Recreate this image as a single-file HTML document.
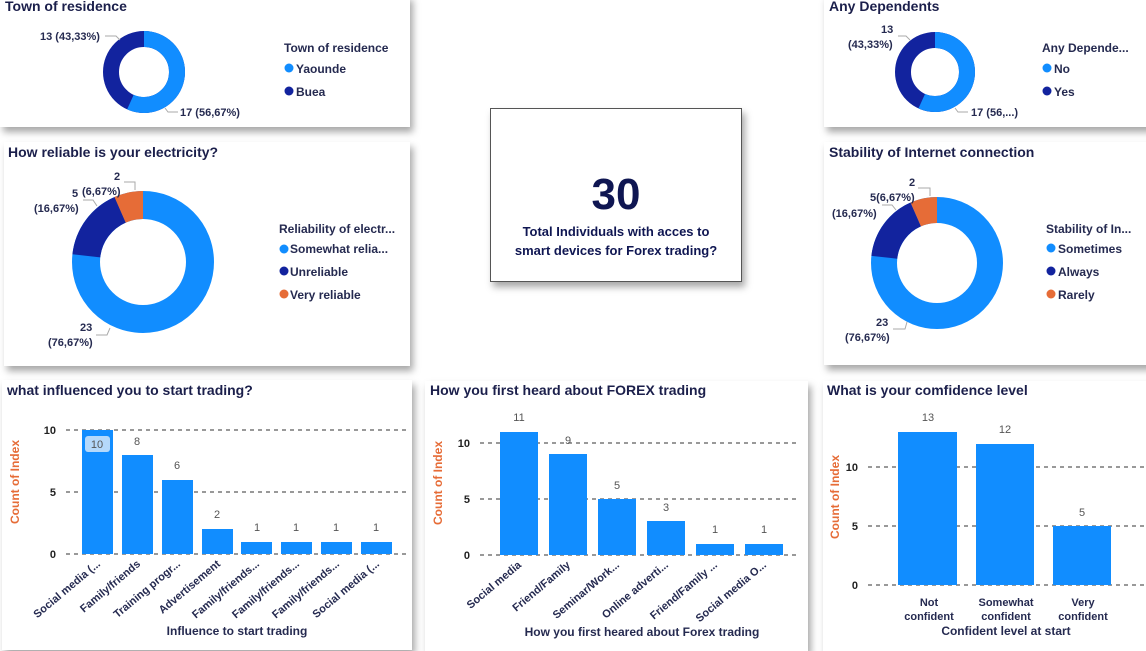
<!DOCTYPE html>
<html><head><meta charset="utf-8"><style>
html,body{margin:0;padding:0;background:#fff;width:1146px;height:639px;overflow:hidden;font-family:"Liberation Sans",sans-serif}
.c{position:absolute;background:#fff;box-shadow:3px 5px 7px rgba(0,0,0,.35)}
svg{position:absolute;left:0;top:0}
text{font-family:"Liberation Sans",sans-serif}
.t{font-size:14px;font-weight:bold;fill:#1b1f4b}
.l{font-size:11px;font-weight:bold;fill:#252a50}
.lg{font-size:12px;font-weight:bold;fill:#252a50}
.v{font-size:11px;fill:#555}
.ax{font-size:11px;font-weight:bold;fill:#222}
.yl{font-size:12px;font-weight:bold;fill:#e66c37}
.xl{font-size:12px;font-weight:bold;fill:#252a50}
</style></head><body>
<div class="c" style="left:0;top:-5px;width:410px;height:132px"></div>
<div class="c" style="left:4px;top:142px;width:406px;height:224px"></div>
<div class="c" style="left:2px;top:380px;width:410px;height:270px"></div>
<div class="c" style="left:425px;top:381px;width:383px;height:270px"></div>
<div class="c" style="left:823px;top:381px;width:330px;height:270px"></div>
<div class="c" style="left:824px;top:-5px;width:330px;height:132px"></div>
<div class="c" style="left:824px;top:142px;width:330px;height:223px"></div>
<div class="c" style="left:490px;top:108px;width:252px;height:174px;border:1px solid #555;box-sizing:border-box"></div>
<svg width="1146" height="639" viewBox="0 0 1146 639">
<!-- Card A -->
<text class="t" x="5" y="11">Town of residence</text>
<circle cx="144" cy="72" r="33" fill="none" stroke="#12239e" stroke-width="16"/>
<circle cx="144" cy="72" r="33" fill="none" stroke="#118dff" stroke-width="16" stroke-dasharray="117.5 300" transform="rotate(-90 144 72)"/>
<polyline points="105,36 116,36 120,40" fill="none" stroke="#aaa"/>
<text class="l" x="40" y="40">13 (43,33%)</text>
<polyline points="165,108 168,112 178,112" fill="none" stroke="#aaa"/>
<text class="l" x="180" y="116">17 (56,67%)</text>
<text class="lg" x="284" y="52">Town of residence</text>
<circle cx="289" cy="68" r="4.5" fill="#118dff"/><text class="lg" x="296" y="73">Yaounde</text>
<circle cx="289" cy="91" r="4.5" fill="#12239e"/><text class="lg" x="296" y="96">Buea</text>
<!-- Card B -->
<text class="t" x="8" y="157">How reliable is your electricity?</text>
<circle cx="143" cy="262" r="57" fill="none" stroke="#118dff" stroke-width="28"/>
<circle cx="143" cy="262" r="57" fill="none" stroke="#12239e" stroke-width="28" stroke-dasharray="59.7 400" stroke-dashoffset="-274.6" transform="rotate(-90 143 262)"/>
<circle cx="143" cy="262" r="57" fill="none" stroke="#e66c37" stroke-width="28" stroke-dasharray="23.9 400" stroke-dashoffset="-334.2" transform="rotate(-90 143 262)"/>
<text class="l" x="114" y="180">2</text>
<polyline points="124,182 135,182 135,190" fill="none" stroke="#aaa"/>
<text class="l" x="82" y="195">(6,67%)</text>
<text class="l" x="72" y="197">5</text>
<polyline points="83,200 93,200 97,206" fill="none" stroke="#aaa"/>
<text class="l" x="34" y="212">(16,67%)</text>
<text class="l" x="80" y="331">23</text>
<polyline points="96,335 107,335 110,328" fill="none" stroke="#aaa"/>
<text class="l" x="48" y="346">(76,67%)</text>
<text class="lg" x="279" y="233">Reliability of electr...</text>
<circle cx="284" cy="249" r="4.5" fill="#118dff"/><text class="lg" x="290" y="253">Somewhat relia...</text>
<circle cx="284" cy="271" r="4.5" fill="#12239e"/><text class="lg" x="290" y="276">Unreliable</text>
<circle cx="284" cy="294" r="4.5" fill="#e66c37"/><text class="lg" x="290" y="299">Very reliable</text>
<!-- Middle -->
<text x="616" y="209" text-anchor="middle" style="font-size:44px;font-weight:bold;fill:#0f1652">30</text>
<text x="616" y="236" text-anchor="middle" style="font-size:13px;font-weight:bold;fill:#0f1652">Total Individuals with acces to</text>
<text x="616" y="255" text-anchor="middle" style="font-size:13px;font-weight:bold;fill:#0f1652">smart devices for Forex trading?</text>
<!-- Card F -->
<text class="t" x="829" y="11">Any Dependents</text>
<circle cx="935" cy="72" r="32" fill="none" stroke="#12239e" stroke-width="16"/>
<circle cx="935" cy="72" r="32" fill="none" stroke="#118dff" stroke-width="16" stroke-dasharray="114 300" transform="rotate(-90 935 72)"/>
<text class="l" x="881" y="33">13</text>
<polyline points="898,36 906,36 910,40" fill="none" stroke="#aaa"/>
<text class="l" x="848" y="48">(43,33%)</text>
<polyline points="955,108 958,112 968,112" fill="none" stroke="#aaa"/>
<text class="l" x="971" y="116">17 (56,...)</text>
<text class="lg" x="1042" y="52">Any Depende...</text>
<circle cx="1047" cy="68" r="4.5" fill="#118dff"/><text class="lg" x="1054" y="73">No</text>
<circle cx="1047" cy="91" r="4.5" fill="#12239e"/><text class="lg" x="1054" y="96">Yes</text>
<!-- Card G -->
<text class="t" x="829" y="157">Stability of Internet connection</text>
<circle cx="937" cy="263" r="53" fill="none" stroke="#118dff" stroke-width="26"/>
<circle cx="937" cy="263" r="53" fill="none" stroke="#12239e" stroke-width="26" stroke-dasharray="55.5 400" stroke-dashoffset="-255.3" transform="rotate(-90 937 263)"/>
<circle cx="937" cy="263" r="53" fill="none" stroke="#e66c37" stroke-width="26" stroke-dasharray="22.2 400" stroke-dashoffset="-310.8" transform="rotate(-90 937 263)"/>
<text class="l" x="909" y="186">2</text>
<polyline points="918,188 930,188 930,196" fill="none" stroke="#aaa"/>
<text class="l" x="870" y="201">5(6,67%)</text>
<polyline points="882,205 892,205 896,210" fill="none" stroke="#aaa"/>
<text class="l" x="832" y="217">(16,67%)</text>
<text class="l" x="876" y="326">23</text>
<polyline points="893,329 905,329 907,322" fill="none" stroke="#aaa"/>
<text class="l" x="845" y="341">(76,67%)</text>
<text class="lg" x="1046" y="233">Stability of In...</text>
<circle cx="1051" cy="248" r="4.5" fill="#118dff"/><text class="lg" x="1058" y="253">Sometimes</text>
<circle cx="1051" cy="271" r="4.5" fill="#12239e"/><text class="lg" x="1058" y="276">Always</text>
<circle cx="1051" cy="294" r="4.5" fill="#e66c37"/><text class="lg" x="1058" y="299">Rarely</text>

<!-- Chart C -->
<text class="t" x="7" y="395">what influenced you to start trading?</text>
<g stroke="#333" stroke-dasharray="4 4"><line x1="66" y1="430" x2="410" y2="430"/><line x1="66" y1="492" x2="410" y2="492"/><line x1="66" y1="554" x2="410" y2="554"/></g>
<text class="ax" x="56" y="434" text-anchor="end">10</text><text class="ax" x="56" y="496" text-anchor="end">5</text><text class="ax" x="56" y="558" text-anchor="end">0</text>
<text class="yl" transform="translate(19 482) rotate(-90)" text-anchor="middle">Count of Index</text>
<g fill="#118dff">
<rect x="82" y="430" width="31" height="124"/><rect x="122" y="455" width="31" height="99"/><rect x="162" y="480" width="31" height="74"/><rect x="202" y="529" width="31" height="25"/><rect x="241" y="542" width="31" height="12"/><rect x="281" y="542" width="31" height="12"/><rect x="321" y="542" width="31" height="12"/><rect x="361" y="542" width="31" height="12"/>
</g>
<rect x="85" y="436" width="25" height="16" rx="3" fill="#b5d9fb"/>
<g class="v" text-anchor="middle"><text x="97" y="448">10</text><text x="137" y="445">8</text><text x="177" y="469">6</text><text x="217" y="518">2</text><text x="257" y="531">1</text><text x="296" y="531">1</text><text x="336" y="531">1</text><text x="376" y="531">1</text></g>
<g class="l" text-anchor="end">
<text transform="translate(101 565) rotate(-40)">Social media (...</text>
<text transform="translate(141 565) rotate(-40)">Family/friends</text>
<text transform="translate(181 565) rotate(-40)">Training progr...</text>
<text transform="translate(221 565) rotate(-40)">Advertisement</text>
<text transform="translate(260 565) rotate(-40)">Family/friends...</text>
<text transform="translate(300 565) rotate(-40)">Family/friends...</text>
<text transform="translate(340 565) rotate(-40)">Family/friends...</text>
<text transform="translate(380 565) rotate(-40)">Social media (...</text>
</g>
<text class="xl" x="237" y="635" text-anchor="middle">Influence to start trading</text>

<!-- Chart D -->
<text class="t" x="430" y="395">How you first heard about FOREX trading</text>
<g stroke="#333" stroke-dasharray="4 4"><line x1="480" y1="443" x2="800" y2="443"/><line x1="480" y1="499" x2="800" y2="499"/><line x1="480" y1="555" x2="800" y2="555"/></g>
<text class="ax" x="470" y="447" text-anchor="end">10</text><text class="ax" x="470" y="503" text-anchor="end">5</text><text class="ax" x="470" y="559" text-anchor="end">0</text>
<text class="yl" transform="translate(442 483) rotate(-90)" text-anchor="middle">Count of Index</text>
<g fill="#118dff">
<rect x="500" y="432" width="38" height="123"/><rect x="549" y="454" width="38" height="101"/><rect x="598" y="499" width="38" height="56"/><rect x="647" y="521" width="38" height="34"/><rect x="696" y="544" width="38" height="11"/><rect x="745" y="544" width="38" height="11"/>
</g>
<g class="v" text-anchor="middle"><text x="519" y="421">11</text><text x="568" y="444">9</text><text x="617" y="489">5</text><text x="666" y="511">3</text><text x="715" y="533">1</text><text x="764" y="533">1</text></g>
<g class="l" text-anchor="end">
<text transform="translate(522 566) rotate(-40)">Social media</text>
<text transform="translate(571 566) rotate(-40)">Friend/Family</text>
<text transform="translate(620 566) rotate(-40)">Seminar/Work...</text>
<text transform="translate(669 566) rotate(-40)">Online adverti...</text>
<text transform="translate(718 566) rotate(-40)">Friend/Family ...</text>
<text transform="translate(767 566) rotate(-40)">Social media O...</text>
</g>
<text class="xl" x="642" y="636" text-anchor="middle">How you first heared about Forex trading</text>

<!-- Chart E -->
<text class="t" x="827" y="395">What is your comfidence level</text>
<g stroke="#333" stroke-dasharray="4 4"><line x1="868" y1="467" x2="1146" y2="467"/><line x1="868" y1="526" x2="1146" y2="526"/><line x1="868" y1="585" x2="1146" y2="585"/></g>
<text class="ax" x="858" y="471" text-anchor="end">10</text><text class="ax" x="858" y="530" text-anchor="end">5</text><text class="ax" x="858" y="589" text-anchor="end">0</text>
<text class="yl" transform="translate(839 497) rotate(-90)" text-anchor="middle">Count of Index</text>
<g fill="#118dff">
<rect x="898" y="432" width="59" height="153"/><rect x="976" y="444" width="58" height="141"/><rect x="1053" y="526" width="58" height="59"/>
</g>
<g class="v" text-anchor="middle"><text x="928" y="421">13</text><text x="1005" y="433">12</text><text x="1082" y="516">5</text></g>
<g class="l" text-anchor="middle">
<text x="929" y="606">Not</text><text x="929" y="620">confident</text>
<text x="1006" y="606">Somewhat</text><text x="1006" y="620">confident</text>
<text x="1083" y="606">Very</text><text x="1083" y="620">confident</text>
</g>
<text class="xl" x="1006" y="635" text-anchor="middle">Confident level at start</text>
</svg>
</body></html>
